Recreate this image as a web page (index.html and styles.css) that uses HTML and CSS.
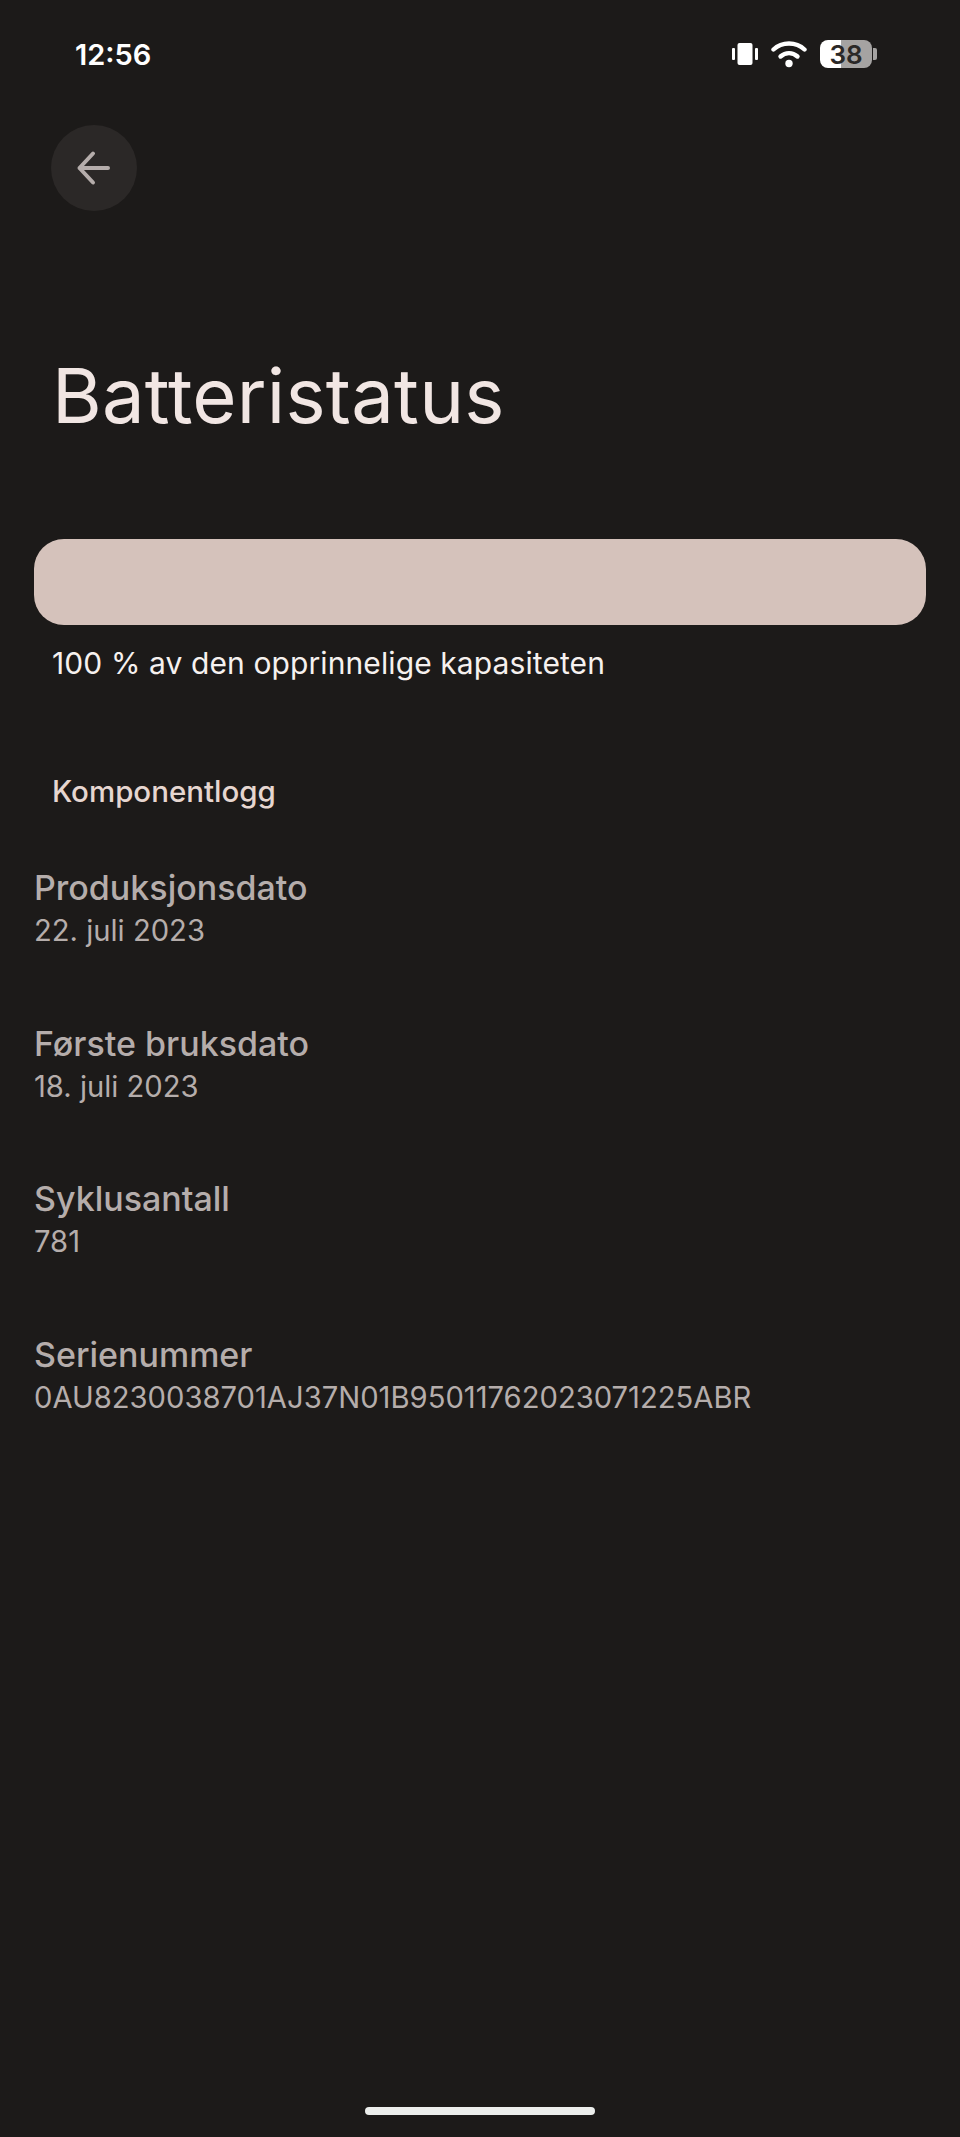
FILE: index.html
```html
<!DOCTYPE html>
<html lang="nb">
<head>
    <meta charset="UTF-8">
    <meta name="viewport" content="width=device-width, initial-scale=1.0">
    <title>Batteristatus</title>
    <link rel="stylesheet" href="styles.css">
</head>
<body>
    <div class="page">
        <div class="status-bar">
            <span class="clock">12:56</span>
            <div class="status-icons">
                <svg class="icon-vibrate" width="26" height="24" viewBox="0 0 26 24">
                    <rect x="0" y="6" width="3" height="12" rx="1" fill="#fff"/>
                    <rect x="5.5" y="1" width="15" height="22" rx="2" fill="#fff"/>
                    <rect x="23" y="6" width="3" height="12" rx="1" fill="#fff"/>
                </svg>
                <svg class="icon-wifi" width="36" height="28" viewBox="0 0 36 28">
                    <path d="M2.5 9.5C11 1.5 25 1.5 33.5 9.5" fill="none" stroke="#fff" stroke-width="4.4" stroke-linecap="round"/>
                    <path d="M9.5 16.5C14.5 12 21.5 12 26.5 16.5" fill="none" stroke="#fff" stroke-width="4.4" stroke-linecap="round"/>
                    <circle cx="18" cy="23.5" r="3.7" fill="#fff"/>
                </svg>
                <div class="battery">
                    <div class="battery-body"><span class="battery-level">38</span></div>
                    <div class="battery-tip"></div>
                </div>
            </div>
        </div>

        <button class="back-btn">
            <svg width="36" height="36" viewBox="0 0 36 36">
                <path d="M32 18H3.5M17 3.5L3.5 18L17 32.5" fill="none" stroke="#b5adab" stroke-width="4" stroke-linecap="round" stroke-linejoin="round"/>
            </svg>
        </button>

        <h1 class="title">Batteristatus</h1>

        <div class="capacity-bar"></div>
        <p class="capacity-text">100 % av den opprinnelige kapasiteten</p>

        <h2 class="section-title">Komponentlogg</h2>

        <ul class="info-list">
            <li class="info-item">
                <div class="info-label">Produksjonsdato</div>
                <div class="info-value">22. juli 2023</div>
            </li>
            <li class="info-item">
                <div class="info-label">Første bruksdato</div>
                <div class="info-value">18. juli 2023</div>
            </li>
            <li class="info-item">
                <div class="info-label">Syklusantall</div>
                <div class="info-value">781</div>
            </li>
            <li class="info-item">
                <div class="info-label">Serienummer</div>
                <div class="info-value">0AU8230038701AJ37N01B95011762023071225ABR</div>
            </li>
        </ul>

        <div class="home-bar"></div>
    </div>
</body>
</html>
```

FILE: styles.css
```css
* {
    margin: 0;
    padding: 0;
    box-sizing: border-box;
    font-family: 'Inter', 'Roboto', sans-serif;
}

body {
    background-color: #1c1a19;
}

.page {
    display: flex;
    flex-direction: column;
    height: 2137px;
    overflow: hidden;
}

.status-bar {
    display: flex;
    justify-content: space-between;
    align-items: center;
    height: 54px;
    margin-top: 27px;
    padding: 0 83px 0 75px;
}

.clock {
    color: #fff;
    font-size: 29px;
    font-weight: 600;
}

.status-icons {
    display: flex;
    align-items: center;
}

.icon-wifi {
    margin-left: 13px;
}

.battery {
    display: flex;
    align-items: center;
    margin-left: 13px;
}

.battery-body {
    display: flex;
    align-items: center;
    justify-content: center;
    width: 52px;
    height: 28px;
    border-radius: 8px;
    background: linear-gradient(to right, #fff 40%, #a5a3a2 40%);
}

.battery-level {
    color: #2a2827;
    font-size: 26px;
    font-weight: 600;
}

.battery-tip {
    width: 4px;
    height: 12px;
    margin-left: 1px;
    border-radius: 0 2px 2px 0;
    background-color: #a5a3a2;
}

.back-btn {
    display: flex;
    align-items: center;
    justify-content: center;
    width: 86px;
    height: 86px;
    margin: 44px 0 0 51px;
    border: none;
    border-radius: 50%;
    background-color: #2b2827;
}

.title {
    margin: 142px 0 0 52px;
    color: #f1e6e3;
    font-size: 76px;
    font-weight: 400;
    letter-spacing: 0.2px;
    line-height: 84px;
}

.capacity-bar {
    height: 86px;
    margin: 102px 34px 0;
    border-radius: 30px;
    background-color: #d5c2bb;
}

.capacity-text {
    margin: 20px 0 0 52px;
    color: #f6f1ef;
    font-size: 30px;
    letter-spacing: 0.1px;
    line-height: 36px;
}

.section-title {
    margin: 92px 0 0 52px;
    color: #e6d6d0;
    font-size: 29.5px;
    font-weight: 500;
    line-height: 36px;
}

.info-list {
    margin-top: 58px;
    padding: 0 34px;
    list-style-type: none;
}

.info-item {
    height: 155.5px;
}

.info-label {
    color: #b5adab;
    font-size: 34px;
    font-weight: 500;
    line-height: 42px;
}

.info-value {
    color: #b5adab;
    font-size: 29.2px;
    line-height: 44px;
}

.home-bar {
    width: 230px;
    height: 8px;
    margin: auto auto 22px;
    border-radius: 4px;
    background-color: #eceeec;
}
```
